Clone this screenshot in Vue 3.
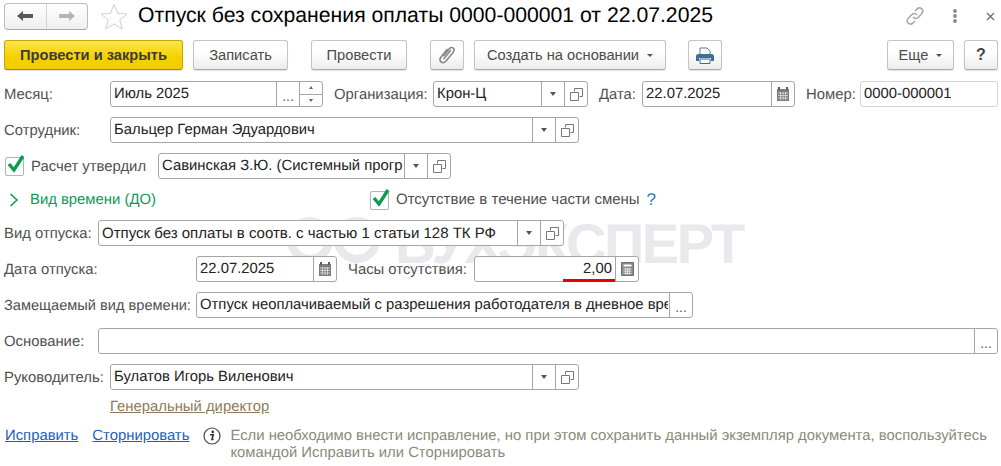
<script setup>
</script>

<template>
  <div class="page">
    <div class="mark">
      <svg class="mark-logo" width="100" height="50" viewBox="0 0 100 50">
        <g fill="none" stroke="#e8e8ed" stroke-width="8">
          <circle cx="25" cy="25" r="19" />
          <circle cx="72" cy="25" r="19" />
        </g>
      </svg>
      <span class="mark-text">БУХЭКСПЕРТ</span>
    </div>

    <header class="head">
      <div class="nav">
        <button class="nav-btn">
          <svg width="18" height="12" viewBox="0 0 18 12"><path d="M1 6 7 1v3h10v4H7v3z" fill="#5a5a5a" /></svg>
        </button>
        <button class="nav-btn">
          <svg width="18" height="12" viewBox="0 0 18 12"><path d="M17 6 11 1v3H1v4h10v3z" fill="#b4b4b4" /></svg>
        </button>
      </div>
      <svg class="star" width="28" height="27" viewBox="0 0 28 27">
        <path d="M14 1.500 17.600 10.400 27 11 19.800 17 22.200 26 14 21 5.800 26 8.200 17 1 11 10.400 10.400Z" fill="none" stroke="#d0d0d0" />
      </svg>
      <h1 class="title">Отпуск без сохранения оплаты 0000-000001 от 22.07.2025</h1>
      <div class="head-tools">
        <svg width="20" height="20" viewBox="0 0 20 20" fill="none" stroke="#ababab" stroke-width="1.700" stroke-linecap="round">
          <path d="M8.500 11.500 C10 13 12 12.500 13 11.500 L16.500 8 C18.500 6 18 3.800 16.800 2.800 C15.500 1.700 13.500 1.700 12 3 L10.500 4.500" />
          <path d="M11.500 8.500 C10 7 8 7.500 7 8.500 L3.500 12 C1.500 14 2 16.200 3.200 17.200 C4.500 18.300 6.500 18.300 8 17 L9.500 15.500" />
        </svg>
        <svg class="dots" width="6" height="14" viewBox="0 0 6 14" fill="#8a8a8a">
          <circle cx="3" cy="2" r="1.900" /><circle cx="3" cy="7" r="1.900" /><circle cx="3" cy="12" r="1.900" />
        </svg>
        <svg class="close" width="9" height="9" viewBox="0 0 9 9" stroke="#666" stroke-width="1.100"><path d="M1 1 8 8M8 1 1 8" /></svg>
      </div>
    </header>

    <div class="toolbar">
      <button class="btn primary">Провести и закрыть</button>
      <button class="btn w-save">Записать</button>
      <button class="btn w-post">Провести</button>
      <button class="btn icon w-clip">
        <svg width="18" height="20" viewBox="0 0 18 20" fill="none" stroke="#8c8c8c" stroke-width="1.700" stroke-linecap="round">
          <path d="M6 10.500 11.500 3.500 C13 1.800 15.500 2.500 16 4 C16.400 5.300 16 6.200 15 7.500 L8.500 15.500 C6.800 17.700 4.700 18.200 3.200 17 C1.600 15.700 1.800 13.500 3.200 11.700 L9 4.500" />
          <path d="M6 13.500 12.500 5.500" />
        </svg>
      </button>
      <button class="btn w-create">Создать на основании<i class="caret"></i></button>
      <button class="btn icon w-print">
        <svg width="18" height="17" viewBox="0 0 18 17">
          <path d="M4 1h7l3 3v4H4z" fill="#fff" stroke="#557a9c" />
          <path d="M2.500 7h13A2.500 2.500 0 0 1 18 9.500V14h-3v-3H3v3H0V9.500A2.500 2.500 0 0 1 2.500 7z" fill="#3f6d96" />
          <path d="M4 12h10v4.500H4z" fill="#fff" stroke="#3f6d96" />
        </svg>
      </button>
      <button class="btn w-more">Еще<i class="caret"></i></button>
      <button class="btn w-help">?</button>
    </div>

    <div class="row row-first">
      <label class="lbl w-106">Месяц:</label>
      <div class="field w-month">
        <span class="val">Июль 2025</span>
        <span class="seg ell">...</span>
        <span class="seg spin">
          <i class="spin-up"></i>
          <i class="spin-down"></i>
        </span>
      </div>
      <label class="lbl org">Организация:</label>
      <div class="field w-org">
        <span class="val">Крон-Ц</span>
        <span class="seg"><i class="drop"></i></span>
        <span class="seg"><svg class="open" width="13" height="13" viewBox="0 0 13 13"><path d="M4.500 3.500V.5h8v8h-3M.5 4.500h8v8h-8z" fill="none" stroke="#777" /></svg></span>
      </div>
      <label class="lbl date-l">Дата:</label>
      <div class="field w-date">
        <span class="val">22.07.2025</span>
        <span class="seg">
          <svg width="14" height="14" viewBox="0 0 14 14"><path d="M1 2h12v12H1z" fill="#7d7d7d" /><path d="M3 0v3M11 0v3" stroke="#5f5f5f" stroke-width="2" /><path d="M2 6h10M2 8.500h10M2 11h10M4.500 5v8M7 5v8M9.500 5v8" stroke="#ddd" stroke-width=".8" /></svg>
        </span>
      </div>
      <label class="lbl num-l">Номер:</label>
      <div class="field w-num light"><span class="val">0000-000001</span></div>
    </div>

    <div class="row">
      <label class="lbl w-106">Сотрудник:</label>
      <div class="field w-469">
        <span class="val">Бальцер Герман Эдуардович</span>
        <span class="seg"><i class="drop"></i></span>
        <span class="seg"><svg class="open" width="13" height="13" viewBox="0 0 13 13"><path d="M4.500 3.500V.5h8v8h-3M.5 4.500h8v8h-8z" fill="none" stroke="#777" /></svg></span>
      </div>
    </div>

    <div class="row">
      <span class="check">
        <svg width="20" height="22" viewBox="0 0 20 22"><path d="M3 10 8 16 17 2" fill="none" stroke="#0b9c50" stroke-width="3.400" /></svg>
      </span>
      <label class="lbl approved">Расчет утвердил</label>
      <div class="field w-approver">
        <span class="val clip">Савинская З.Ю. (Системный прогр</span>
        <span class="seg"><i class="drop"></i></span>
        <span class="seg"><svg class="open" width="13" height="13" viewBox="0 0 13 13"><path d="M4.500 3.500V.5h8v8h-3M.5 4.500h8v8h-8z" fill="none" stroke="#777" /></svg></span>
      </div>
    </div>

    <div class="row row-group">
      <svg class="chev" width="10" height="14" viewBox="0 0 10 14"><path d="M1.500 1 8 7l-6.500 6" fill="none" stroke="#0a9a55" stroke-width="1.500" /></svg>
      <span class="group-title">Вид времени (ДО)</span>
      <span class="check check-2">
        <svg width="20" height="22" viewBox="0 0 20 22"><path d="M3 10 8 16 17 2" fill="none" stroke="#0b9c50" stroke-width="3.400" /></svg>
      </span>
      <label class="lbl absent">Отсутствие в течение части смены</label>
      <span class="hint">?</span>
    </div>

    <div class="row row-kind">
      <label class="lbl w-94">Вид отпуска:</label>
      <div class="field w-466">
        <span class="val wide">Отпуск без оплаты в соотв. с частью 1 статьи 128 ТК РФ</span>
        <span class="seg"><i class="drop"></i></span>
        <span class="seg"><svg class="open" width="13" height="13" viewBox="0 0 13 13"><path d="M4.500 3.500V.5h8v8h-3M.5 4.500h8v8h-8z" fill="none" stroke="#777" /></svg></span>
      </div>
    </div>

    <div class="row">
      <label class="lbl w-192">Дата отпуска:</label>
      <div class="field w-141">
        <span class="val">22.07.2025</span>
        <span class="seg">
          <svg width="14" height="14" viewBox="0 0 14 14"><path d="M1 2h12v12H1z" fill="#7d7d7d" /><path d="M3 0v3M11 0v3" stroke="#5f5f5f" stroke-width="2" /><path d="M2 6h10M2 8.500h10M2 11h10M4.500 5v8M7 5v8M9.500 5v8" stroke="#ddd" stroke-width=".8" /></svg>
        </span>
      </div>
      <label class="lbl hours-l">Часы отсутствия:</label>
      <div class="field w-hours">
        <span class="val right">2,00<i class="redline"></i></span>
        <span class="seg">
          <svg width="13" height="14" viewBox="0 0 13 14"><path d="M.5.5h12v13H.500z" fill="#8a8a8a" stroke="#6f6f6f" /><path d="M2.500 2.500h8v2h-8z" fill="#fff" /><path d="M2.500 7h8M2.500 9.200h8M2.500 11.400h8M4.700 6v6.500M6.500 6v6.500M8.300 6v6.500" stroke="#eee" stroke-width=".8" /></svg>
        </span>
      </div>
    </div>

    <div class="row">
      <label class="lbl w-192 narrow">Замещаемый вид времени:</label>
      <div class="field w-497">
        <span class="val clip">Отпуск неоплачиваемый с разрешения работодателя в дневное вре</span>
        <span class="seg ell">...</span>
      </div>
    </div>

    <div class="row">
      <label class="lbl w-94">Основание:</label>
      <div class="field w-900">
        <span class="val"></span>
        <span class="seg ell">...</span>
      </div>
    </div>

    <div class="row">
      <label class="lbl w-106">Руководитель:</label>
      <div class="field w-469">
        <span class="val">Булатов Игорь Виленович</span>
        <span class="seg"><i class="drop"></i></span>
        <span class="seg"><svg class="open" width="13" height="13" viewBox="0 0 13 13"><path d="M4.500 3.500V.5h8v8h-3M.5 4.500h8v8h-8z" fill="none" stroke="#777" /></svg></span>
      </div>
    </div>

    <a class="post-link">Генеральный директор</a>

    <div class="foot">
      <a class="link fix">Исправить</a>
      <a class="link storno">Сторнировать</a>
      <svg class="info" width="18" height="18" viewBox="0 0 18 18">
        <circle cx="9" cy="9" r="8" fill="none" stroke="#444" stroke-width="1.200" />
        <circle cx="9.800" cy="4.900" r="1.300" fill="#333" />
        <path d="M7 7.800h3.200L9 12.500h1.600" fill="none" stroke="#333" stroke-width="1.600" />
      </svg>
      <p class="note">Если необходимо внести исправление, но при этом сохранить данный экземпляр документа, воспользуйтесь<br />командой Исправить или Сторнировать</p>
    </div>
  </div>
</template>

<style scoped>
.page {
  position: relative;
  width: 1001px;
  height: 466px;
  overflow: hidden;
  background: #fff;
  font: 14.850px/16px "Liberation Sans", Arial, sans-serif;
  text-rendering: geometricPrecision;
  color: #4b4b4b;
}
.mark {
  position: absolute;
  left: 285px;
  top: 215px;
  display: flex;
  align-items: flex-start;
  gap: 10px;
}
.mark-logo { flex: none; }
.mark-text {
  margin-top: 4px;
  font-size: 56px;
  line-height: 50px;
  font-weight: 700;
  color: #e8e8ed;
  letter-spacing: -2.400px;
  white-space: nowrap;
}
.head {
  position: relative;
  display: flex;
  align-items: center;
  height: 40px;
  padding: 0 0 8px 4px;
  box-sizing: border-box;
}
.nav {
  display: flex;
  width: 84px;
  height: 27px;
  border: 1px solid #bcbcbc;
  border-bottom-color: #a8a8a8;
  border-radius: 4px;
  box-sizing: border-box;
  background: linear-gradient(#fff, #efefef);
}
.nav-btn {
  flex: 1;
  padding: 0;
  border: 0;
  background: none;
  display: flex;
  align-items: center;
  justify-content: center;
}
.nav-btn + .nav-btn { border-left: 1px solid #d4d4d4; }
.star { margin-left: 12px; flex: none; }
.title {
  margin: 0 0 0 10px;
  font-size: 21.200px;
  line-height: 24px;
  font-weight: 400;
  color: #000;
  white-space: nowrap;
}
.head-tools {
  margin-left: auto;
  display: flex;
  align-items: center;
  padding-right: 6px;
}
.dots { margin-left: 27px; }
.close { margin-left: 28px; }

.toolbar {
  position: relative;
  display: flex;
  height: 30px;
  padding-left: 4px;
}
.btn {
  height: 30px;
  padding: 0;
  box-sizing: border-box;
  border: 1px solid #c4c4c4;
  border-bottom-color: #a9a9a9;
  border-radius: 3px;
  background: linear-gradient(#fff 40%, #ececec);
  box-shadow: 0 1px 1px rgba(0,0,0,.12);
  font: 14.670px "Liberation Sans", Arial, sans-serif;
  color: #4b4b4b;
  display: flex;
  align-items: center;
  justify-content: center;
  flex: none;
}
.primary {
  width: 179px;
  background: linear-gradient(#fbe64a, #f6d200 55%, #f2cb00);
  border-color: #c6a700;
  border-bottom-color: #a58c00;
  font-weight: 700;
  color: #3c3c3c;
}
.w-save { width: 95px; margin-left: 10px; }
.w-post { width: 96px; margin-left: 23px; }
.w-clip { width: 34px; margin-left: 23px; }
.w-create { width: 192px; margin-left: 10px; }
.w-print { width: 34px; margin-left: 22px; }
.w-more { width: 67px; margin-left: 165px; }
.w-help { width: 34px; margin-left: 10px; font-weight: 700; font-size: 16px; color: #444; }
.caret {
  width: 0;
  height: 0;
  margin-left: 8px;
  border: 3px solid transparent;
  border-top: 3px solid #555;
  border-bottom: 0;
}

.row {
  position: relative;
  display: flex;
  align-items: center;
  height: 26px;
  margin-top: 10px;
  padding-left: 4px;
}
.row-first { margin-top: 11px; }
.row-group { height: 22px; margin-top: 10px; }
.row-kind { margin-top: 9px; }
.lbl { flex: none; padding-top: 2px; white-space: nowrap; color: #505050; }
.narrow { font-size: 14.600px; }
.w-106 { width: 106px; }
.w-94 { width: 94px; }
.w-192 { width: 192px; }
.org { margin-left: 11px; width: 99px; }
.date-l { margin-left: 11px; width: 43px; }
.num-l { margin-left: 11px; width: 54px; }
.approved { margin-left: 7px; width: 127px; }
.absent { margin-left: 7px; padding-top: 0; font-size: 15px; }
.hours-l { margin-left: 11px; width: 126px; }

.field {
  flex: none;
  display: flex;
  height: 26px;
  box-sizing: border-box;
  border: 1px solid #a6a6a6;
  border-radius: 3px;
  background: #fff;
}
.field.light { border-color: #d4d4d4; }
.w-month { width: 213px; }
.w-org { width: 155px; }
.w-date { width: 153px; }
.w-num { width: 138px; }
.w-469 { width: 469px; }
.w-approver { width: 293px; }
.w-466 { width: 466px; }
.w-141 { width: 141px; }
.w-hours { width: 165px; }
.w-497 { width: 497px; }
.w-900 { width: 900px; }
.val {
  flex: 1;
  min-width: 0;
  padding: 0 3px;
  line-height: 25px;
  color: #222;
  white-space: nowrap;
  overflow: hidden;
}
.val.wide { font-size: 15px; }
.val.clip { margin-right: 1px; padding-right: 0; }
.val.right { position: relative; text-align: right; overflow: visible; }
.redline {
  position: absolute;
  right: 0;
  bottom: -1px;
  width: 52px;
  height: 3px;
  background: #e60000;
}
.seg {
  flex: none;
  width: 23px;
  box-sizing: border-box;
  border-left: 1px solid #a6a6a6;
  display: flex;
  align-items: center;
  justify-content: center;
}
.ell {
  align-items: flex-end;
  line-height: 20px;
  font-size: 14px;
  color: #555;
}
.spin { flex-direction: column; }
.spin-up, .spin-down {
  flex: 1;
  width: 100%;
  display: flex;
  align-items: center;
  justify-content: center;
}
.spin-down { border-top: 1px solid #a6a6a6; }
.spin-up::after, .spin-down::after {
  content: "";
  border: 2.500px solid transparent;
}
.spin-up::after { border-bottom: 3px solid #666; border-top: 0; }
.spin-down::after { border-top: 3px solid #666; border-bottom: 0; }
.drop {
  width: 0;
  height: 0;
  border: 3.500px solid transparent;
  border-top: 4px solid #555;
  border-bottom: 0;
}
.check {
  flex: none;
  position: relative;
  width: 19px;
  height: 19px;
  margin-left: 1px;
  box-sizing: border-box;
  border: 1px solid #b4b4b4;
  border-radius: 2px;
  background: #fff;
}
.check svg { position: absolute; left: 0; top: -4px; }
.check-2 { margin-left: 199px; }
.chev { margin-left: 5px; flex: none; }
.group-title { margin-left: 11px; width: 141px; color: #0a9a55; white-space: nowrap; }
.hint { margin-left: 7px; color: #1a7ec4; font-size: 17px; }

.post-link {
  position: relative;
  display: block;
  width: max-content;
  margin: 9px 0 0 110px;
  color: #8c7a5c;
  line-height: 16px;
  text-decoration: underline;
}
.foot {
  position: relative;
  display: flex;
  align-items: flex-start;
  margin-top: 13px;
  padding-left: 5px;
}
.link {
  color: #1a5fc0;
  text-decoration: underline;
  flex: none;
}
.storno { margin-left: 14px; }
.info { flex: none; margin: -1px 0 0 14px; }
.note {
  margin: 0 0 0 9px;
  color: #8a8a78;
  line-height: 17px;
  white-space: nowrap;
}
</style>
